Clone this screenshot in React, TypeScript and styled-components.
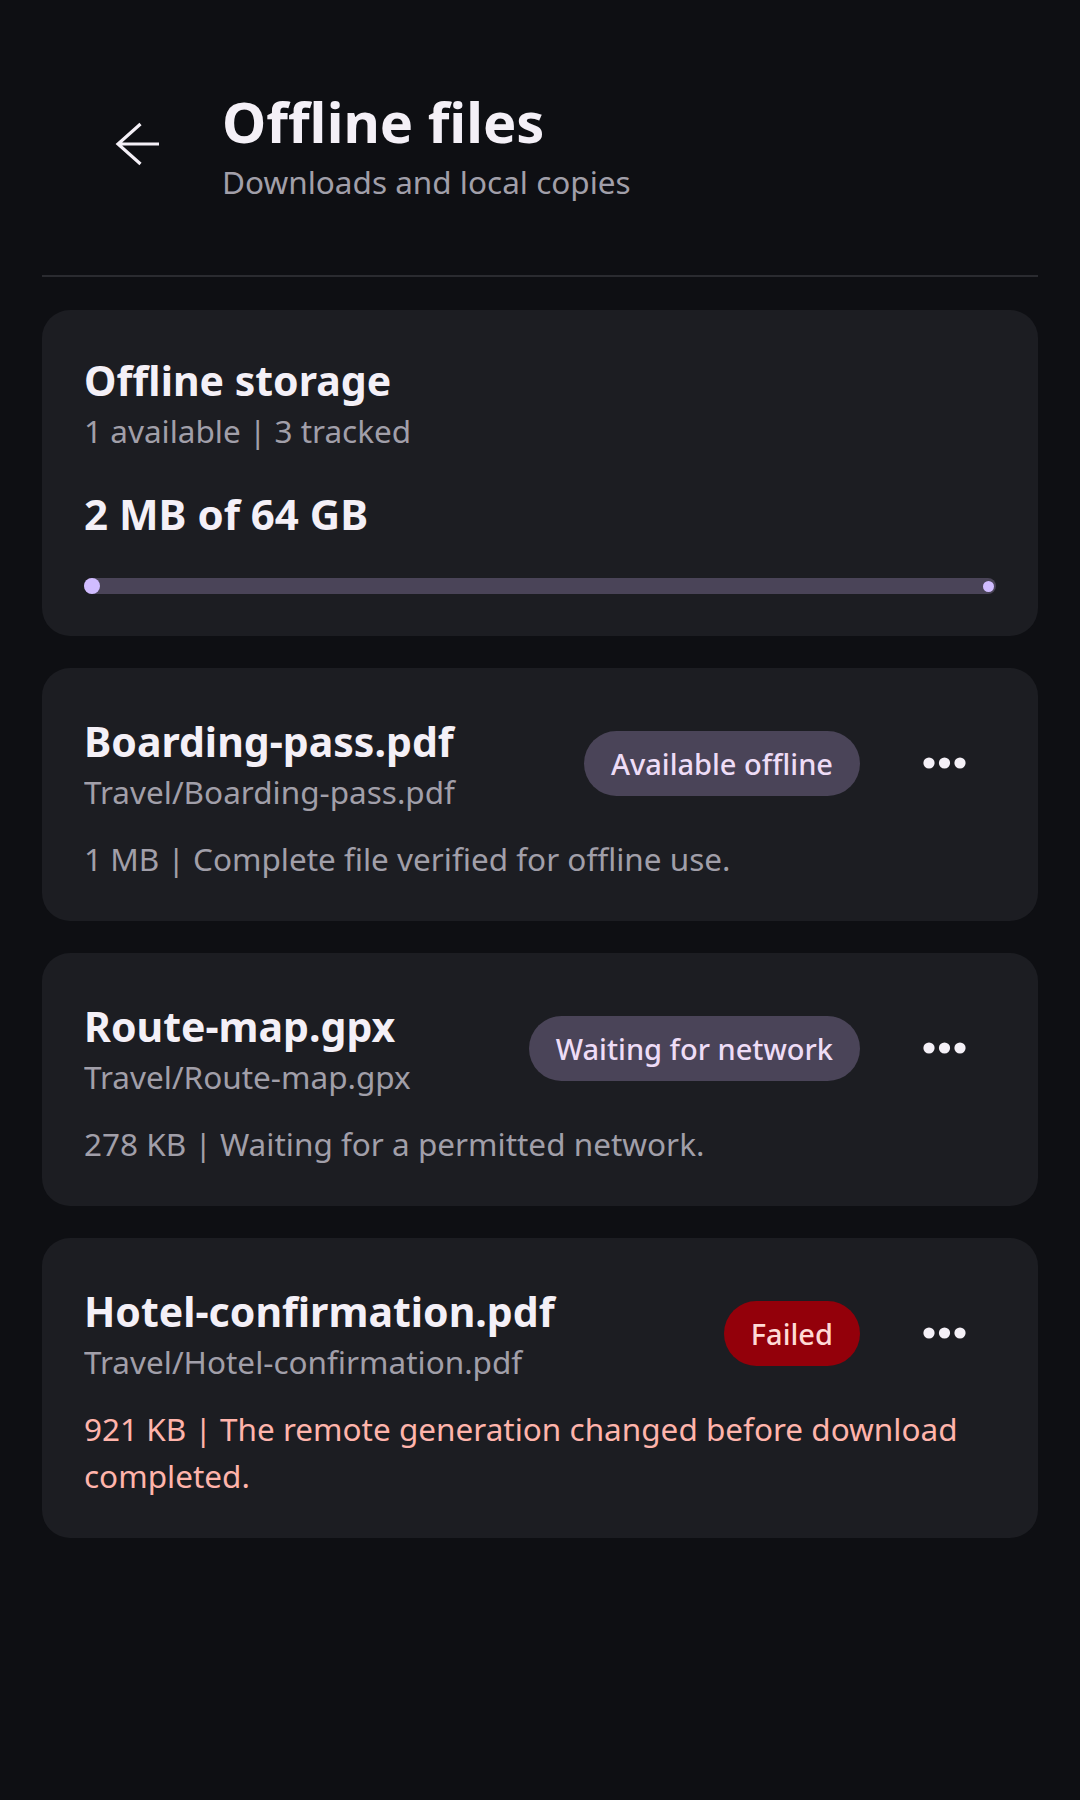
import React from "react";
import styled, { createGlobalStyle } from "styled-components";

const GlobalStyle = createGlobalStyle`
  html, body {
    margin: 0;
    padding: 0;
    background: #0e0f13;
  }
  body {
    font-family: "Noto Sans", "Open Sans", sans-serif;
    color: #f4f0f7;
  }
  * { box-sizing: border-box; }
`;

const Page = styled.div`
  min-height: 1800px;
  padding: 0 42px 60px;
  background: #0e0f13;
`;

const Header = styled.header`
  display: flex;
  align-items: center;
  gap: 32px;
  padding: 83px 42px 71px 44px;
`;

const IconButton = styled.button`
  width: 104px;
  height: 104px;
  flex-shrink: 0;
  display: flex;
  align-items: center;
  justify-content: center;
  background: transparent;
  border: none;
  padding: 0;
  color: #f4f0f7;
  cursor: pointer;
`;

const HeaderText = styled.div`
  display: flex;
  flex-direction: column;
`;

const PageTitle = styled.h1`
  margin: 0;
  font-size: 56px;
  font-weight: 700;
  line-height: 76px;
  color: #f4f0f7;
`;

const PageSubtitle = styled.p`
  margin: 0;
  font-size: 31.5px;
  line-height: 45px;
  color: #a19fa9;
`;

const Divider = styled.hr`
  margin: 0;
  border: none;
  height: 2px;
  background: #2a2b30;
`;

const List = styled.main`
  display: flex;
  flex-direction: column;
  gap: 32px;
  padding-top: 33px;
`;

const Card = styled.section<{ $compact?: boolean }>`
  background: #1c1d22;
  border-radius: 28px;
  padding: ${(p) => (p.$compact ? "41px 42px 41px" : "43px 42px 39px")};
  display: flex;
  flex-direction: column;
`;

const CardTitle = styled.h2`
  margin: 0;
  font-size: 41px;
  font-weight: 700;
  line-height: 58px;
  color: #f4f0f7;
  white-space: nowrap;
  overflow: hidden;
  text-overflow: ellipsis;
`;

const Muted = styled.p`
  margin: 0;
  font-size: 31.5px;
  line-height: 44px;
  color: #a19fa9;
  white-space: nowrap;
  overflow: hidden;
  text-overflow: ellipsis;
`;

const Amount = styled.p`
  margin: 32px 0 0;
  font-size: 42px;
  font-weight: 700;
  line-height: 58px;
  color: #f4f0f7;
`;

const Track = styled.div`
  position: relative;
  margin: 35px 0 1px;
  height: 16px;
  border-radius: 8px;
  background: #4a4458;
`;

const Indicator = styled.div`
  height: 16px;
  min-width: 16px;
  border-radius: 8px;
  background: #d0bcff;
`;

const StopDot = styled.span`
  position: absolute;
  right: 2px;
  top: 50%;
  width: 11px;
  height: 11px;
  margin-top: -5.5px;
  border-radius: 50%;
  background: #d0bcff;
`;

const Row = styled.div`
  display: flex;
  align-items: center;
  gap: 32px;
`;

const TextCol = styled.div`
  flex: 1;
  min-width: 0;
  display: flex;
  flex-direction: column;
`;

type Tone = "neutral" | "error";

const Badge = styled.span<{ $tone: Tone }>`
  flex-shrink: 0;
  display: inline-flex;
  align-items: center;
  height: 65px;
  padding: 0 27px;
  border-radius: 33px;
  font-size: 29px;
  font-weight: 500;
  white-space: nowrap;
  background: ${(p) => (p.$tone === "error" ? "#93000a" : "#4a4458")};
  color: ${(p) => (p.$tone === "error" ? "#ffdad6" : "#eedcf6")};
`;

const Meta = styled.p<{ $tone: Tone }>`
  margin: 20px 0 0;
  font-size: 31.5px;
  line-height: 47px;
  color: ${(p) => (p.$tone === "error" ? "#ffb4ab" : "#a19fa9")};
`;

const BackIcon = () => (
  <svg width="48" height="48" viewBox="0 0 48 48" fill="none" aria-hidden="true">
    <path
      d="M45 24H4M26.5 4L4 24l22.5 20"
      stroke="currentColor"
      strokeWidth="3.2"
      strokeLinecap="butt"
      strokeLinejoin="miter"
    />
  </svg>
);

const MoreIcon = () => (
  <svg width="48" height="16" viewBox="0 0 48 16" fill="currentColor" aria-hidden="true">
    <circle cx="9" cy="8" r="5.6" />
    <circle cx="24.5" cy="8" r="5.6" />
    <circle cx="40" cy="8" r="5.6" />
  </svg>
);

type FileItem = {
  name: string;
  path: string;
  status: string;
  tone: Tone;
  meta: string;
};

const files: FileItem[] = [
  {
    name: "Boarding-pass.pdf",
    path: "Travel/Boarding-pass.pdf",
    status: "Available offline",
    tone: "neutral",
    meta: "1 MB | Complete file verified for offline use.",
  },
  {
    name: "Route-map.gpx",
    path: "Travel/Route-map.gpx",
    status: "Waiting for network",
    tone: "neutral",
    meta: "278 KB | Waiting for a permitted network.",
  },
  {
    name: "Hotel-confirmation.pdf",
    path: "Travel/Hotel-confirmation.pdf",
    status: "Failed",
    tone: "error",
    meta: "921 KB | The remote generation changed before download completed.",
  },
];

const usedBytes = 2 * 1024 * 1024;
const totalBytes = 64 * 1024 * 1024 * 1024;

export default function App() {
  const pct = (usedBytes / totalBytes) * 100;
  return (
    <>
      <GlobalStyle />
      <Page>
        <Header>
          <IconButton aria-label="Back">
            <BackIcon />
          </IconButton>
          <HeaderText>
            <PageTitle>Offline files</PageTitle>
            <PageSubtitle>Downloads and local copies</PageSubtitle>
          </HeaderText>
        </Header>
        <Divider />
        <List>
          <Card $compact>
            <CardTitle>Offline storage</CardTitle>
            <Muted>1 available | 3 tracked</Muted>
            <Amount>2 MB of 64 GB</Amount>
            <Track>
              <Indicator style={{ width: `${pct}%` }} />
              <StopDot />
            </Track>
          </Card>
          {files.map((f) => (
            <Card key={f.name}>
              <Row>
                <TextCol>
                  <CardTitle>{f.name}</CardTitle>
                  <Muted>{f.path}</Muted>
                </TextCol>
                <Badge $tone={f.tone}>{f.status}</Badge>
                <IconButton aria-label="More options">
                  <MoreIcon />
                </IconButton>
              </Row>
              <Meta $tone={f.tone}>{f.meta}</Meta>
            </Card>
          ))}
        </List>
      </Page>
    </>
  );
}
